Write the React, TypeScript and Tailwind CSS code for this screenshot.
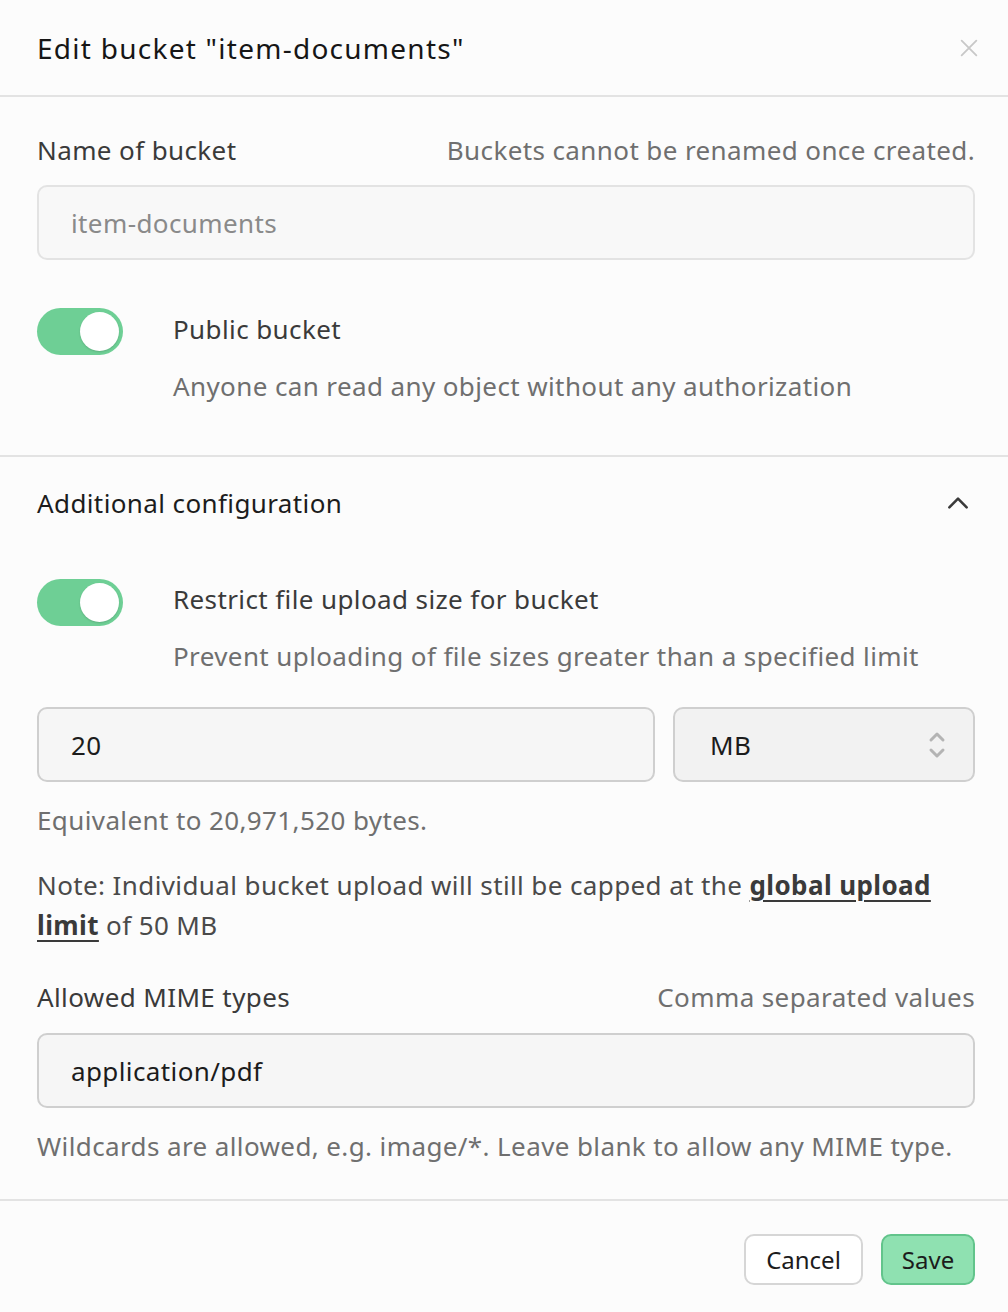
import React, { useState } from 'react';

const Toggle = ({ on, onClick }: { on: boolean; onClick: () => void }) => (
    <button
        onClick={onClick}
        className={`w-[86px] h-[47px] rounded-full shrink-0 flex items-center px-[4px] ${on ? 'bg-[#6ecf95] justify-end' : 'bg-[#d8d8d8] justify-start'}`}
    >
        <span className="w-[39px] h-[39px] rounded-full bg-white shadow-[0_1px_2px_rgba(0,0,0,0.15)]" />
    </button>
);

export default function App() {
    const [isPublic, setIsPublic] = useState(true);
    const [restrict, setRestrict] = useState(true);
    const [size, setSize] = useState('20');
    const [mime, setMime] = useState('application/pdf');

    return (
        <div className="w-[1008px] h-[1312px] bg-[#fcfcfc] text-[26px] tracking-[0.015em] leading-[36px] text-[#3c3c3c] flex flex-col" style={{ fontFamily: '"Noto Sans", Lato, sans-serif' }}>
            <div className="h-[97px] px-[37px] flex items-center justify-between border-b-2 border-[#e3e3e3]">
                <h2 className="text-[28px] tracking-[0.045em] text-[#161616]">Edit bucket "item-documents"</h2>
                <svg width="22" height="22" viewBox="0 0 24 24" fill="none" stroke="#c8c8c8" strokeWidth="2" strokeLinecap="round" className="mr-[-9px]">
                    <path d="M4 4l16 16M20 4L4 20" />
                </svg>
            </div>

            <div className="pl-[37px] pr-[33px] pt-[35px] pb-[51px] border-b-2 border-[#e3e3e3]">
                <div className="flex justify-between items-center h-[36px]">
                    <span className="text-[#3a3a3a]">Name of bucket</span>
                    <span className="text-[#6f6f6f]">Buckets cannot be renamed once created.</span>
                </div>
                <div className="mt-[17px] h-[75px] rounded-[10px] border-2 border-[#e3e3e3] bg-[#f8f8f8] flex items-center px-[32px] text-[#8a8a8a]">
                    item-documents
                </div>
                <div className="mt-[48px] flex gap-[50px]">
                    <Toggle on={isPublic} onClick={() => setIsPublic(!isPublic)} />
                    <div className="flex flex-col">
                        <span className="text-[#3a3a3a] mt-[3px]">Public bucket</span>
                        <span className="text-[#6f6f6f] mt-[21px]">Anyone can read any object without any authorization</span>
                    </div>
                </div>
            </div>

            <div className="pl-[37px] pr-[33px] pt-[28px] pb-[35px] border-b-2 border-[#e3e3e3]">
                <div className="flex justify-between items-center h-[36px]">
                    <span className="text-[#1c1c1c]">Additional configuration</span>
                    <svg width="26" height="26" viewBox="0 0 24 24" fill="none" stroke="#3a3a3a" strokeWidth="2.4" strokeLinecap="round" strokeLinejoin="round" className="mr-[4px]">
                        <path d="M4 16l8-8 8 8" />
                    </svg>
                </div>
                <div className="mt-[58px] flex gap-[50px]">
                    <Toggle on={restrict} onClick={() => setRestrict(!restrict)} />
                    <div className="flex flex-col">
                        <span className="text-[#3a3a3a] mt-[2px]">Restrict file upload size for bucket</span>
                        <span className="text-[#6f6f6f] mt-[21px]">Prevent uploading of file sizes greater than a specified limit</span>
                    </div>
                </div>
                <div className="mt-[33px] flex gap-[18px]">
                    <input
                        value={size}
                        onChange={(e) => setSize(e.target.value)}
                        className="flex-1 min-w-0 h-[75px] rounded-[10px] border-2 border-[#cfcfcf] bg-[#f6f6f6] px-[32px] text-[#1c1c1c] outline-none"
                    />
                    <div className="w-[302px] h-[75px] rounded-[10px] border-2 border-[#cfcfcf] bg-[#f2f2f2] flex items-center justify-between pl-[35px] pr-[26px] text-[#1c1c1c]">
                        <span>MB</span>
                        <svg width="20" height="32" viewBox="0 0 20 32" fill="none" stroke="#b4b4b4" strokeWidth="3" strokeLinecap="round" strokeLinejoin="round">
                            <path d="M4 11l6-6 6 6M4 21l6 6 6-6" />
                        </svg>
                    </div>
                </div>
                <p className="mt-[20px] text-[#6f6f6f]">Equivalent to 20,971,520 bytes.</p>
                <p className="mt-[27px] text-[#4a4a4a] leading-[40px]">
                    Note: Individual bucket upload will still be capped at the{' '}
                    <a className="font-bold underline underline-offset-[5px] decoration-2 text-[#3a3a3a]">global upload limit</a> of 50 MB
                </p>
                <div className="mt-[34px] flex justify-between items-center h-[36px]">
                    <span className="text-[#3a3a3a]">Allowed MIME types</span>
                    <span className="text-[#6f6f6f]">Comma separated values</span>
                </div>
                <input
                    value={mime}
                    onChange={(e) => setMime(e.target.value)}
                    className="mt-[18px] w-full h-[75px] rounded-[10px] border-2 border-[#cfcfcf] bg-[#f6f6f6] px-[32px] text-[#1c1c1c] outline-none"
                />
                <p className="mt-[20px] text-[#6f6f6f]">Wildcards are allowed, e.g. image/*. Leave blank to allow any MIME type.</p>
            </div>

            <div className="flex justify-end gap-[18px] px-[33px] pt-[33px]">
                <button className="w-[119px] h-[51px] rounded-[10px] border-2 border-[#d6d6d6] bg-white text-[#1c1c1c] text-[24px] tracking-normal">Cancel</button>
                <button className="w-[94px] h-[51px] rounded-[10px] border-2 border-[#62c48b] bg-[#8fe1b1] text-[#1c1c1c] text-[24px] tracking-normal">Save</button>
            </div>
        </div>
    );
}
